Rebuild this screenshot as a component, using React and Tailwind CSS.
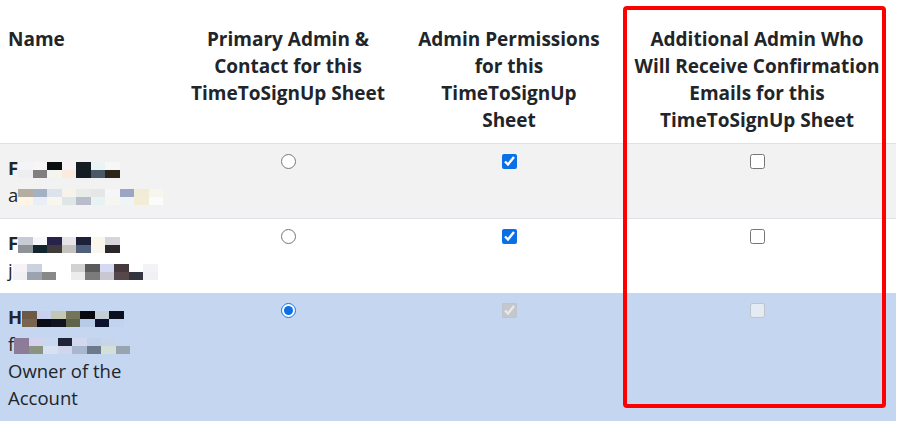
import React from 'react';

const ROWS = [
  {
    bg: 'bg-[#f2f2f2]',
    border: true,
    first: 'F',
    second: 'a',
    nameBlocks: [
      ['#f3f3f8', '#f7f5f5', '#0b0e0e', '#f6f1f4', '#131d23', '#e9f4f4', '#f7f7f7', '#f2f2f2'],
      ['#eeeef2', '#7f7f7f', '#f2f6ee', '#f9ecdf', '#131d23', '#4b5866', '#2c2519', '#f2f2f2'],
    ],
    mailBlocks: [
      ['#b5aea0', '#a3b1c4', '#dde3ee', '#f7f3ea', '#e8ece8', '#e6e6e6', '#f6f6f8', '#9aa6c4', '#f1ecd6', '#f6f6ef'],
      ['#fdf5e6', '#e9eef6', '#f7f7ee', '#dfe6e6', '#b8bccb', '#e6f2f4', '#f6f6f0', '#eef5f7', '#f3edd8', '#fbfbfb'],
    ],
    primary: false,
    perm: true,
    extra: false,
    disabled: false,
  },
  {
    bg: 'bg-white',
    border: false,
    first: 'F',
    second: 'j',
    nameBlocks: [
      ['#c8cad6', '#f7f7fb', '#27234a', '#e6e4e6', '#1c2039', '#fbf6ec', '#d7d5dc', '#ffffff'],
      ['#8f9296', '#13242c', '#3f3b3b', '#c4c2bc', '#4f5e7c', '#f8f6ef', '#2b2629', '#ffffff'],
    ],
    mailBlocks: [
      ['#f5f3f7', '#c9d2de', '#ffffff', '#ffffff', '#d2d2d2', '#5a5a5a', '#d5d9f3', '#46393d', '#ffffff', '#f3f3f6'],
      ['#f1f1f4', '#9ba4ae', '#888888', '#ffffff', '#ececec', '#7b7b7b', '#c9c8d2', '#55474a', '#343541', '#f1f1f4'],
    ],
    primary: false,
    perm: true,
    extra: false,
    disabled: false,
  },
  {
    bg: 'bg-[#c5d6f0]',
    border: false,
    first: 'H',
    second: 'f',
    nameBlocks: [
      ['#6e5a44', '#c9d0ee', '#c3c8b4', '#767458', '#08090f', '#c4ccd6', '#0a1022', '#c5d6f0'],
      ['#7a6450', '#0a0c16', '#11131e', '#5d6447', '#b7cbe7', '#0a1230', '#c0d4f0', '#c5d6f0'],
    ],
    mailBlocks: [
      ['#8d7b9a', '#d4d2ec', '#c8d8ee', '#1f2536', '#d2d9ee', '#c3d2ea', '#c8d4ea', '#c5d6f0'],
      ['#8c7c98', '#8a9480', '#d6e2f2', '#cfd6ee', '#aab6cc', '#6d7a8c', '#d2e0d8', '#98a4b0'],
    ],
    primary: true,
    perm: true,
    extra: false,
    disabled: true,
    owner: true,
  },
];

function Mosaic({ blocks }) {
  return (
    <span className="inline-flex flex-col align-middle">
      {blocks.map((row, i) => (
        <span key={i} className="flex">
          {row.map((c, j) => (
            <span key={j} className="block h-[8px] w-[14.5px] shrink-0" style={{ backgroundColor: c }} />
          ))}
        </span>
      ))}
    </span>
  );
}

const th = 'px-2 pt-[26px] pb-[9px] align-top font-bold text-[19px] leading-[27px]';
const td = 'px-2 pt-[10px] pb-[10px] align-top';

export default function App() {
  return (
    <div
      className="relative h-[422px] w-[900px] overflow-hidden bg-white text-[#212529]"
      style={{ fontFamily: '"Open Sans", "Noto Sans", sans-serif' }}
    >
      <table className="w-[896px] table-fixed border-collapse">
        <colgroup>
          <col className="w-[176px]" />
          <col className="w-[224px]" />
          <col className="w-[218px]" />
          <col className="w-[278px]" />
        </colgroup>
        <thead>
          <tr className="border-b border-[#dee2e6]">
            <th className={`${th} text-left`}>Name</th>
            <th className={`${th} text-center`}>
              Primary Admin &amp;
              <br />
              Contact for this
              <br />
              TimeToSignUp Sheet
            </th>
            <th className={`${th} text-center`}>
              Admin Permissions
              <br />
              for this
              <br />
              TimeToSignUp
              <br />
              Sheet
            </th>
            <th className={`${th} text-center whitespace-nowrap`}>
              Additional Admin Who
              <br />
              Will Receive Confirmation
              <br />
              Emails for this
              <br />
              TimeToSignUp Sheet
            </th>
          </tr>
        </thead>
        <tbody className="text-[18.5px] leading-[27px]">
          {ROWS.map((r, i) => (
            <tr key={i} className={`${r.bg} ${r.border ? 'border-b border-[#dee2e6]' : ''}`}>
              <td className={td}>
                <div className="whitespace-nowrap font-bold">
                  {r.first}
                  <Mosaic blocks={r.nameBlocks} />
                </div>
                <div className="whitespace-nowrap">
                  {r.second}
                  <Mosaic blocks={r.mailBlocks} />
                </div>
                {r.owner && (
                  <div>
                    Owner of the
                    <br />
                    Account
                  </div>
                )}
              </td>
              <td className={td}>
                <input
                  type="radio"
                  name="primary"
                  defaultChecked={r.primary}
                  className="mx-auto block h-[15px] w-[15px] accent-[#0b6fe6]"
                />
              </td>
              <td className={td}>
                <input
                  type="checkbox"
                  defaultChecked={r.perm}
                  disabled={r.disabled}
                  className="mx-auto block h-[15px] w-[15px] accent-[#0b6fe6]"
                />
              </td>
              <td className={td}>
                <input
                  type="checkbox"
                  defaultChecked={r.extra}
                  disabled={r.disabled}
                  className="mx-auto block h-[15px] w-[15px] accent-[#0b6fe6]"
                />
              </td>
            </tr>
          ))}
        </tbody>
      </table>
      <div className="pointer-events-none absolute left-[623px] top-[6px] h-[402px] w-[263px] rounded-[4px] border-4 border-[#ff0000]" />
    </div>
  );
}
